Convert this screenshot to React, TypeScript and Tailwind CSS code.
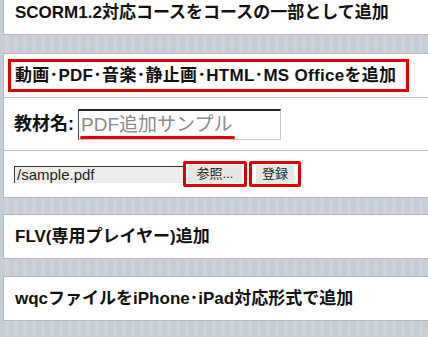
import React from 'react';

const font = { fontFamily: '"Liberation Sans", "Noto Sans CJK JP", sans-serif' };

const Card = ({ children, className = '' }: { children: React.ReactNode; className?: string }) => (
    <div className={`ml-[3px] -mr-[10px] bg-white border border-[#b3b8be] ${className}`}>{children}</div>
);

export default function App() {
    return (
        <div
            className="w-[428px] h-[337px] overflow-hidden bg-[repeating-linear-gradient(90deg,#c6cdd5_0px,#c6cdd5_5px,#ced4da_5px,#ced4da_9px)]"
            style={font}
        >
            {/* top item (partly scrolled off) */}
            <Card className="-mt-[10px] h-[45px] flex items-center pl-[11px]">
                <span className="text-[17px] font-bold text-[#111]">SCORM1.2対応コースをコースの一部として追加</span>
            </Card>

            {/* open item */}
            <Card className="mt-[18px]">
                <div className="h-[44px] flex items-center pl-[4px] border-b border-[#c4c4c4]">
                    <div className="h-[33px] w-[401px] border-[3px] border-[#e00000] flex items-center pl-[4px]">
                        <span className="text-[17px] font-bold text-[#111] whitespace-nowrap tracking-[0.3px]">動画･PDF･音楽･静止画･HTML･MS Officeを追加</span>
                    </div>
                </div>
                <div className="h-[53px] flex items-center pl-[10px] border-b border-[#c4c4c4]">
                    <span className="text-[18px] font-bold text-[#111] mr-[4px]">教材名:</span>
                    <div className="relative w-[203px] h-[31px] border border-[#c8c8c8] border-t-[#222] border-t-2 border-l-[#444] flex items-center pl-[2px]">
                        <span className="text-[19px] text-[#8a8a8a] leading-none">PDF追加サンプル</span>
                        <div className="absolute left-[1px] top-[25px] w-[155px] h-[3px] rounded-full bg-[#e00000]"></div>
                    </div>
                </div>
                <div className="h-[46px] flex items-center pl-[10px]">
                    <div className="w-[170px] h-[17px] bg-[#eeede9] border-t border-l border-[#333] flex items-center pl-[2px]">
                        <span className="text-[15px] text-[#222] leading-none">/sample.pdf</span>
                    </div>
                    <div className="w-[64px] h-[26px] border-[3px] border-[#e00000] rounded-[2px] flex items-center justify-center -ml-[1px]">
                        <div className="w-[54px] h-[18px] bg-[#e6e6e4] flex items-center justify-center text-[13px] text-[#222]">参照...</div>
                    </div>
                    <div className="w-[52px] h-[26px] border-[3px] border-[#e00000] rounded-[2px] flex items-center justify-center ml-[2px]">
                        <div className="w-[38px] h-[18px] bg-[#e6e6e4] flex items-center justify-center text-[13px] text-[#222]">登録</div>
                    </div>
                </div>
            </Card>

            <Card className="mt-[16px] h-[45px] flex items-center pl-[11px]">
                <span className="text-[17px] font-bold text-[#111]">FLV(専用プレイヤー)追加</span>
            </Card>

            <Card className="mt-[17px] h-[45px] flex items-center pl-[11px]">
                <span className="text-[17px] font-bold text-[#111]">wqcファイルをiPhone･iPad対応形式で追加</span>
            </Card>
        </div>
    );
}
